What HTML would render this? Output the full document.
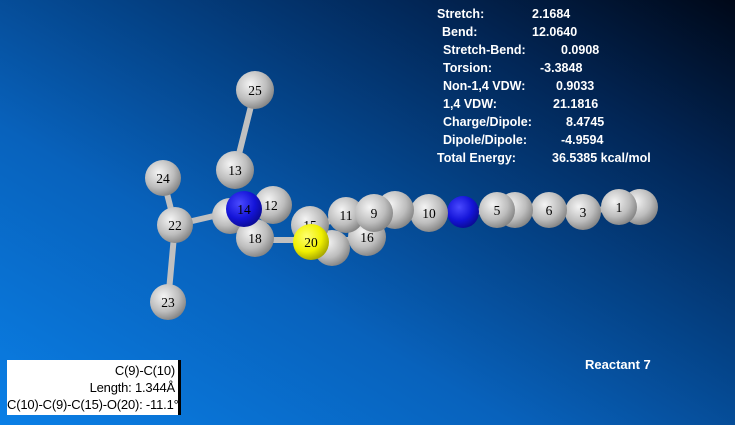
<!DOCTYPE html><html><head><style>
body{margin:0;width:735px;height:425px;overflow:hidden;font-family:"Liberation Sans",sans-serif}
#bg{position:absolute;left:0;top:0;width:735px;height:425px;background:linear-gradient(to top right,#0a7fe6 0%,#0862bc 35%,#044286 58%,#022656 78%,#000818 100%)}
.st{position:absolute;color:#fff;font-weight:bold;font-size:12.5px;white-space:pre;font-family:"Liberation Sans",sans-serif}
#box{position:absolute;left:7px;top:360px;width:174px;height:55px;background:#fff;border-right:3px solid #000;font-family:"Liberation Sans",sans-serif;font-size:13px;text-align:right;line-height:17px;padding-top:2px;padding-right:3px;box-sizing:border-box;white-space:nowrap;letter-spacing:-0.2px}
</style></head><body>
<div id="bg"></div>
<svg width="735" height="425" style="position:absolute;left:0;top:0">
<defs>
<radialGradient id="g" cx="0.38" cy="0.35" r="0.7"><stop offset="0" stop-color="#f4f4f4"/><stop offset="0.6" stop-color="#bdbdbd"/><stop offset="1" stop-color="#808080"/></radialGradient>
<radialGradient id="b" cx="0.38" cy="0.35" r="0.7"><stop offset="0" stop-color="#4a4aff"/><stop offset="0.6" stop-color="#1414d8"/><stop offset="1" stop-color="#0a0a90"/></radialGradient>
<radialGradient id="y" cx="0.38" cy="0.35" r="0.7"><stop offset="0" stop-color="#ffff70"/><stop offset="0.6" stop-color="#f0f000"/><stop offset="1" stop-color="#a0a000"/></radialGradient>
</defs>
<g stroke="#c0c0c0" stroke-width="6" stroke-linecap="round">
<line x1="255" y1="90" x2="235" y2="170"/><line x1="175" y1="225" x2="168" y2="302"/><line x1="175" y1="225" x2="163" y2="178"/><line x1="175" y1="225" x2="244" y2="209"/>
<line x1="374" y1="213" x2="640" y2="209"/><line x1="310" y1="225" x2="374" y2="213"/><line x1="273" y1="240" x2="367" y2="240"/>
</g>
<g font-family="Liberation Serif,serif" font-size="13.5" text-anchor="middle">
<circle cx="640" cy="207" r="18" fill="url(#g)"/><circle cx="619" cy="207" r="18" fill="url(#g)"/><text x="619" y="212">1</text>
<circle cx="583" cy="212" r="18" fill="url(#g)"/><text x="583" y="217">3</text>
<circle cx="549" cy="210" r="18" fill="url(#g)"/><text x="549" y="215">6</text>
<circle cx="515" cy="210" r="18" fill="url(#g)"/><circle cx="497" cy="210" r="18" fill="url(#g)"/><text x="497" y="215">5</text>
<circle cx="463" cy="212" r="16" fill="url(#b)"/>
<circle cx="429" cy="213" r="19" fill="url(#g)"/><text x="429" y="218">10</text>
<circle cx="395" cy="210" r="19" fill="url(#g)"/>
<circle cx="367" cy="237" r="19" fill="url(#g)"/><text x="367" y="242">16</text>
<circle cx="346" cy="215" r="18" fill="url(#g)"/><text x="346" y="220">11</text>
<circle cx="374" cy="213" r="19" fill="url(#g)"/><text x="374" y="218">9</text>
<circle cx="332" cy="248" r="18" fill="url(#g)"/>
<circle cx="273" cy="205" r="19" fill="url(#g)"/><text x="271" y="210">12</text>
<circle cx="230" cy="216" r="18" fill="url(#g)"/>
<circle cx="255" cy="238" r="19" fill="url(#g)"/><text x="255" y="243">18</text>
<circle cx="310" cy="225" r="19" fill="url(#g)"/><text x="310" y="230">15</text>
<circle cx="311" cy="242" r="18" fill="url(#y)"/><text x="311" y="247">20</text>
<circle cx="235" cy="170" r="19" fill="url(#g)"/><text x="235" y="175">13</text>
<circle cx="244" cy="209" r="18" fill="url(#b)"/><text x="244" y="214">14</text>
<circle cx="255" cy="90" r="19" fill="url(#g)"/><text x="255" y="95">25</text>
<circle cx="163" cy="178" r="18" fill="url(#g)"/><text x="163" y="183">24</text>
<circle cx="175" cy="225" r="18" fill="url(#g)"/><text x="175" y="230">22</text>
<circle cx="168" cy="302" r="18" fill="url(#g)"/><text x="168" y="307">23</text>
</g></svg>
<div class="st" style="left:437px;top:7px">Stretch:</div><div class="st" style="left:532px;top:7px">2.1684</div>
<div class="st" style="left:442px;top:25px">Bend:</div><div class="st" style="left:532px;top:25px">12.0640</div>
<div class="st" style="left:443px;top:43px">Stretch-Bend:</div><div class="st" style="left:561px;top:43px">0.0908</div>
<div class="st" style="left:443px;top:61px">Torsion:</div><div class="st" style="left:540px;top:61px">-3.3848</div>
<div class="st" style="left:443px;top:79px">Non-1,4 VDW:</div><div class="st" style="left:556px;top:79px">0.9033</div>
<div class="st" style="left:443px;top:97px">1,4 VDW:</div><div class="st" style="left:553px;top:97px">21.1816</div>
<div class="st" style="left:443px;top:115px">Charge/Dipole:</div><div class="st" style="left:566px;top:115px">8.4745</div>
<div class="st" style="left:443px;top:133px">Dipole/Dipole:</div><div class="st" style="left:561px;top:133px">-4.9594</div>
<div class="st" style="left:437px;top:151px">Total Energy:</div><div class="st" style="left:552px;top:151px">36.5385 kcal/mol</div>
<div class="st" style="left:585px;top:357px;font-size:13px">Reactant 7</div>
<div id="box">C(9)-C(10)<br>Length: 1.344Å<br>C(10)-C(9)-C(15)-O(20): -11.1°</div>
</body></html>
